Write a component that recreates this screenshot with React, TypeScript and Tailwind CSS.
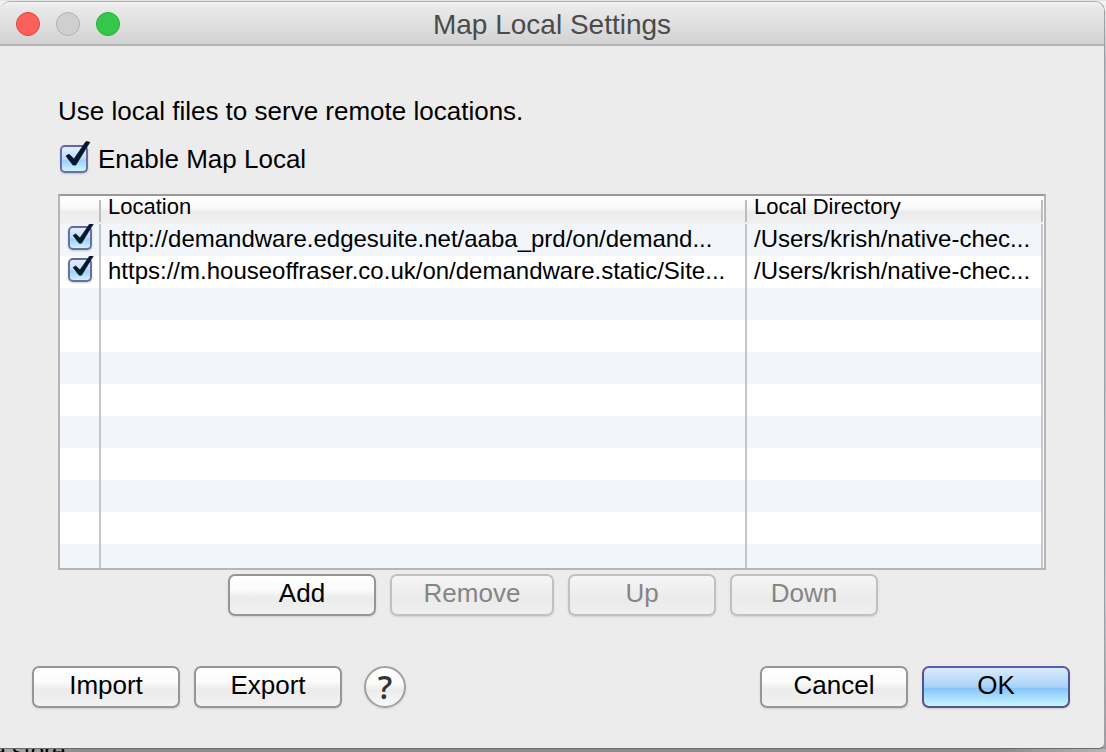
import { useState, type ReactNode } from "react";

type Mapping = { id: string; location: string; directory: string };

const mappings: Mapping[] = [
  {
    id: "m1",
    location: "http://demandware.edgesuite.net/aaba_prd/on/demand...",
    directory: "/Users/krish/native-chec...",
  },
  {
    id: "m2",
    location: "https://m.houseoffraser.co.uk/on/demandware.static/Site...",
    directory: "/Users/krish/native-chec...",
  },
];

const emptyRows = [0, 1, 2, 3, 4, 5, 6, 7, 8];

function Checkbox({ id, label, small }: { id: string; label?: string; small?: boolean }) {
  const [checked, setChecked] = useState(true);
  return (
    <span className={small ? "relative block size-6 shrink-0" : "relative block size-7 shrink-0"}>
      <input
        id={id}
        type="checkbox"
        aria-label={label}
        checked={checked}
        onChange={(e) => setChecked(e.target.checked)}
        className="block size-full appearance-none rounded-[5px] border-2 border-[#6a6ea3] border-t-[#6464b4] bg-[linear-gradient(#e2effc_0%,#bfddf9_48%,#9bcffb_55%,#cdf4fe_100%)] shadow-[0_1px_2px_rgba(0,0,0,0.2)]"
      />
      {checked && (
        <svg viewBox="0 0 28 28" className="pointer-events-none absolute inset-0 size-full overflow-visible" aria-hidden="true">
          <path d="M6 11 L9 9.2 L14 14 L26 -3.5 L29.8 -2.8 L15.8 20 L13 20 Z" fill="#04182f" stroke="#04182f" strokeWidth="0.8" strokeLinejoin="round" />
        </svg>
      )}
    </span>
  );
}

type PushButtonProps = { children: ReactNode; kind?: "normal" | "default"; wide?: boolean; disabled?: boolean };

function PushButton({ children, kind = "normal", wide, disabled }: PushButtonProps) {
  const tone =
    kind === "default"
      ? "border-[#54548c] border-t-[#5a5ab4] bg-[linear-gradient(#d9ebfc_0%,#a9d2f8_50%,#86c4fc_54%,#c8f8fe_100%)]"
      : "border-[#969696] bg-[linear-gradient(#ffffff_0%,#fbfbfb_35%,#ebebeb_58%,#f2f2f2_100%)]";
  return (
    <button
      type="button"
      disabled={disabled}
      className={`${wide ? "w-41" : "w-37"} ${tone} h-10.5 rounded-[7px] border-2 pb-1 text-center text-[26px] leading-8 text-black shadow-[0_1px_2px_rgba(0,0,0,0.12)] disabled:border-[#c1c1c1] disabled:bg-[linear-gradient(#f5f5f5_0%,#ebebeb_60%,#efefef_100%)] disabled:text-[#858585]`}
    >
      {children}
    </button>
  );
}

function HeaderCell({ children }: { children?: ReactNode }) {
  return (
    <th scope="col" className="h-7 p-0 text-left align-top font-normal">
      <div className="flex h-7 items-start justify-between">
        <span className="pl-[7px] text-[22px] leading-[22px]">{children}</span>
        <span className="mt-1 h-5.5 w-0.5 bg-[#bdbdbd]" />
      </div>
    </th>
  );
}

const cell = "h-8 overflow-hidden border-r-2 border-[#c3c6ca] p-0 whitespace-nowrap";
const textCell = "pb-[3px] pl-[7px] text-[24px] leading-7";

export default function App() {
  return (
    <div className="flex h-screen min-h-[640px] flex-col overflow-hidden bg-[#8b898b] font-['Liberation_Sans',Arial,sans-serif] text-black">
      <div className="h-px shrink-0 bg-[#e4e4e4]" />
      <div className="flex min-h-0 flex-1 bg-[linear-gradient(#f4f4f4_0%,#b9bdc7_8%,#c4c8d1_80%,#9b9a9e_100%)] pr-px">
        <main className="flex min-w-0 flex-1 flex-col overflow-hidden rounded-t-[10px] rounded-br-md border-t border-r border-b border-t-[#b0b0b0] border-r-[#a0a1a4] border-b-[#6b6b6b] bg-[#ececec]">
          <header className="flex h-11 shrink-0 items-center justify-between border-b-2 border-[#b2b2b2] bg-[linear-gradient(#f4f4f4_0%,#ebebeb_8%,#d2d2d2_100%)] px-4">
            <div className="flex w-26 gap-4 pt-0.5">
              <button type="button" aria-label="Close" className="size-6 rounded-full border border-[#e0443e] bg-[#fc605b]" />
              <button type="button" aria-label="Minimize" disabled className="size-6 rounded-full border border-[#b2b2b2] bg-[#cfcfcf]" />
              <button type="button" aria-label="Zoom" className="size-6 rounded-full border border-[#24ad37] bg-[#34c84a]" />
            </div>
            <h1 className="pt-1 text-[28px] leading-8 text-[#4b4b4b]">Map Local Settings</h1>
            <div className="w-26" />
          </header>

          <section className="flex min-h-0 flex-1 flex-col px-[58px] pt-[47px]">
            <p className="text-[26px] leading-9">Use local files to serve remote locations.</p>
            <div className="mt-3 flex items-center gap-2.5 pl-0.5">
              <Checkbox id="enable" />
              <label htmlFor="enable" className="text-[26px] leading-9">Enable Map Local</label>
            </div>

            <div className="mt-[17px] min-h-0 flex-1 overflow-hidden border-2 border-[#b5b5b5] border-t-[#999999] bg-white pr-px">
              <table className="w-full table-fixed border-separate border-spacing-0">
                <colgroup>
                  <col className="w-[41px]" />
                  <col />
                  <col className="w-[296px]" />
                </colgroup>
                <thead>
                  <tr className="bg-[linear-gradient(#ffffff_0%,#fafafa_35%,#f4f4f4_50%,#ebebeb_55%,#f0f0f0_100%)]">
                    <HeaderCell />
                    <HeaderCell>Location</HeaderCell>
                    <HeaderCell>Local Directory</HeaderCell>
                  </tr>
                </thead>
                <tbody>
                  {mappings.map((m) => (
                    <tr key={m.id} className="odd:bg-[#f2f6fb]">
                      <td className={`${cell} pb-1 pl-2`}>
                        <Checkbox id={m.id} label={`Enable ${m.location}`} small />
                      </td>
                      <td className={`${cell} ${textCell}`}>{m.location}</td>
                      <td className={`${cell} ${textCell}`}>{m.directory}</td>
                    </tr>
                  ))}
                  {emptyRows.map((n) => (
                    <tr key={n} className="odd:bg-[#f2f6fb]">
                      <td className={cell} />
                      <td className={cell} />
                      <td className={cell} />
                    </tr>
                  ))}
                </tbody>
              </table>
            </div>

            <div className="mt-1 flex justify-center gap-3.5 pl-0.5">
              <PushButton>Add</PushButton>
              <PushButton wide disabled>Remove</PushButton>
              <PushButton disabled>Up</PushButton>
              <PushButton disabled>Down</PushButton>
            </div>
          </section>

          <footer className="mt-12.5 mb-10 flex shrink-0 justify-between pr-[34px] pl-8">
            <div className="flex gap-3.5">
              <PushButton>Import</PushButton>
              <PushButton>Export</PushButton>
              <button
                type="button"
                aria-label="Help"
                className="ml-2 size-10.5 rounded-full border-2 border-[#a0a0a0] bg-[linear-gradient(#ffffff_0%,#fbfbfb_40%,#ececec_58%,#f8f8f8_100%)] font-['Open_Sans',sans-serif] text-[32px] leading-8 font-semibold text-[#333333] shadow-[0_1px_2px_rgba(0,0,0,0.12)]"
              >
                ?
              </button>
            </div>
            <div className="flex gap-3.5">
              <PushButton>Cancel</PushButton>
              <PushButton kind="default">OK</PushButton>
            </div>
          </footer>
        </main>
      </div>
      <div className="h-[3px] shrink-0 overflow-hidden bg-[linear-gradient(90deg,#aaaaaa_0%,#8b898b_8%,#8b898b_90%,#b5b5ba_100%)]">
        <p className="-ml-2 text-[24px] leading-1">e store</p>
      </div>
    </div>
  );
}
